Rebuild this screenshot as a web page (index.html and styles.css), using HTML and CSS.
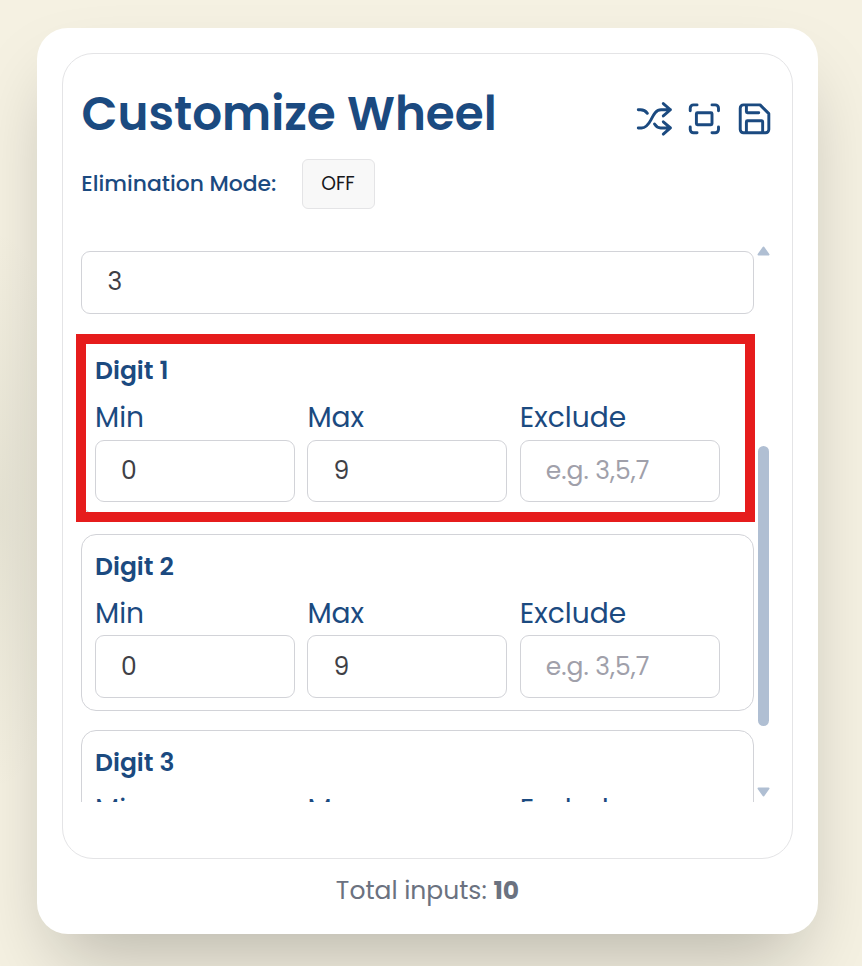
FILE: index.html
```html
<!DOCTYPE html>
<html lang="en">
<head>
<meta charset="utf-8">
<title>Customize Wheel</title>
<link rel="stylesheet" href="styles.css">
</head>
<body>
<main class="card">
  <section class="panel">
    <header class="head">
      <h1>Customize Wheel</h1>
      <div class="tools">
        <svg viewBox="48 28 120 120"><path d="M55 58h7c10 0 16 4 21 11M55 114h10c13 0 21-10 29-25s15-31 31-31h29M132 39l22 19-22 19M105 102c5 8 10 12 19 12h30M132 95l22 19-22 19"/></svg>
        <svg viewBox="198 28 120 120"><path d="M211 61v-8a10 10 0 0 1 10-10h11M278 43h10a10 10 0 0 1 10 10v8M298 111v8a10 10 0 0 1-10 10h-10M232 129h-11a10 10 0 0 1-10-10v-8"/><rect x="230" y="67" width="48" height="37" rx="3"/></svg>
        <svg viewBox="348 28 120 120"><path d="M371 43h51l27 27v49a10 10 0 0 1-10 10h-68a10 10 0 0 1-10-10V53a10 10 0 0 1 10-10zM380 129V95a3 3 0 0 1 3-3h44a3 3 0 0 1 3 3v34M380 43v21a3 3 0 0 0 3 3h35"/></svg>
      </div>
    </header>
    <div class="mode"><span class="mode-label">Elimination Mode:</span><button class="toggle">OFF</button></div>
    <div class="scroller">
      <div class="content">
        <div class="field count">3</div>
        <section class="digit marked">
          <h2>Digit 1</h2>
          <div class="row">
            <div><label>Min</label><div class="field">0</div></div>
            <div><label>Max</label><div class="field">9</div></div>
            <div><label>Exclude</label><div class="field hint">e.g. 3,5,7</div></div>
          </div>
        </section>
        <section class="digit">
          <h2>Digit 2</h2>
          <div class="row">
            <div><label>Min</label><div class="field">0</div></div>
            <div><label>Max</label><div class="field">9</div></div>
            <div><label>Exclude</label><div class="field hint">e.g. 3,5,7</div></div>
          </div>
        </section>
        <section class="digit">
          <h2>Digit 3</h2>
          <div class="row">
            <div><label>Min</label></div>
            <div><label>Max</label></div>
            <div><label>Exclude</label></div>
          </div>
        </section>
      </div>
      <div class="bar">
        <svg viewBox="0 0 13 10"><path d="M6.5 1.5 11.5 8.5H1.5z"/></svg>
        <div class="thumb"></div>
        <svg viewBox="0 0 13 10"><path d="M6.5 8.5 11.5 1.5H1.5z"/></svg>
      </div>
    </div>
  </section>
  <footer>Total inputs: <b>10</b></footer>
</main>
</body>
</html>
```
FILE: styles.css
```css
* { box-sizing: border-box; }
body {
  margin: 0;
  height: 966px;
  padding: 28px 44px 0 37px;
  overflow: hidden;
  background: radial-gradient(ellipse 70px 280px at 0 510px, rgba(90, 100, 80, .09), transparent) #f5f1e2;
  font-family: Poppins, Inter, "Liberation Sans", sans-serif;
  color: #1b4a80;
}
.card {
  height: 906px;
  padding: 25px;
  border-radius: 31px;
  background: #fff;
  box-shadow: 0 39px 78px -19px rgba(0, 0, 0, .25);
}
.panel {
  height: 806px;
  padding: 32px 18px 0;
  border: 1px solid #e4e4e6;
  border-radius: 31px;
}
.head { display: flex; justify-content: space-between; height: 60px; }
h1 { margin: 0; padding-left: .5px; font-size: 46.875px; line-height: 56px; font-weight: 600; white-space: nowrap; }
.tools { display: flex; gap: 11px; margin: 14px -1px 0 0; }
.tools svg { width: 39px; height: 39px; fill: none; stroke: #1b4a80; stroke-width: 9; stroke-linecap: round; stroke-linejoin: round; }
.mode { display: flex; align-items: center; height: 50px; margin-top: 13px; }
.mode-label { width: 221px; padding: 0 0 2px .3px; font-size: 21.875px; font-weight: 500; white-space: nowrap; }
.toggle {
  width: 73px; height: 50px; padding: 0 1px 2px 0;
  border: 1px solid #e4e4e6; border-radius: 6px;
  background: #f8f8f8; color: #18181b;
  font: inherit; font-size: 18.75px;
}
.scroller { display: flex; height: 560px; margin-top: 33px; }
.content { flex: none; width: 683px; height: 560px; margin-left: -8px; padding: 9px 2px 0 8px; overflow: hidden; }
.field {
  height: 62.5px; padding-left: 25px;
  border: 1px solid #d2d3d8; border-radius: 9px;
  font-size: 25px; line-height: 61px; color: #3f3f46; white-space: nowrap;
}
.digit { position: relative; height: 177px; margin-bottom: 19px; padding: 10px 13px 0; border: 1px solid #d2d3d8; border-radius: 15px; }
.count { height: 63px; margin-bottom: 24px; padding-left: 25.5px; line-height: 59px; }
.marked::after { content: ""; position: absolute; inset: -5px -2px -8px -6px; border: 10px solid #e61c1c; }
h2 { margin: 0 0 6px; font-size: 25px; line-height: 44px; font-weight: 600; }
.row { display: grid; grid-template-columns: repeat(3, 200px); gap: 12.4px; }
label { display: block; height: 40px; font-size: 28.125px; line-height: 36px; white-space: nowrap; }
.marked label { height: 41px; }
.marked .field { height: 62px; line-height: 59px; }
.hint { color: #a0a0aa; }
.bar { display: flex; flex-direction: column; align-items: center; width: 13px; margin-left: 1px; padding-top: 4px; }
.bar svg { width: 13px; height: 10px; fill: #b0bfd3; stroke: #b0bfd3; stroke-width: 2; stroke-linejoin: round; }
.thumb { width: 11px; height: 280px; margin: 190px 0 61px; border-radius: 6px; background: #b0bfd3; }
footer { padding-top: 12px; text-align: center; font-size: 25px; line-height: 40px; color: #6b7280; }
footer b { font-weight: 700; }
```
